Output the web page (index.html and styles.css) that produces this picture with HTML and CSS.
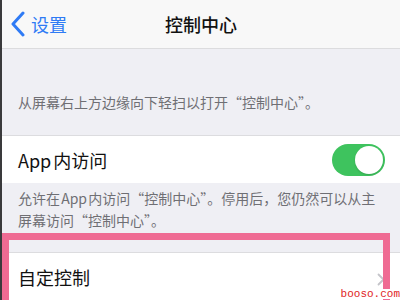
FILE: index.html
```html
<!DOCTYPE html>
<html lang="zh-CN">
<head>
<meta charset="utf-8">
<title>控制中心</title>
<link rel="stylesheet" href="styles.css">
</head>
<body>
<div class="screen">
  <header class="nav">
    <a class="back">
      <svg class="chev" width="16" height="26" viewBox="0 0 16 26"><path d="M13 2 L3 13 L13 24" fill="none" stroke="#2f7bf5" stroke-width="3" stroke-linecap="round" stroke-linejoin="round"/></svg>
      <span>设置</span>
    </a>
    <h1 class="title">控制中心</h1>
  </header>
  <p class="note first">从屏幕右上方边缘向下轻扫以打开“控制中心”。</p>
  <div class="row">
    <span class="label">App 内访问</span>
    <span class="switch"><span class="knob"></span></span>
  </div>
  <p class="note second">允许在 App 内访问“控制中心”。停用后，您仍然可以从主屏幕访问“控制中心”。</p>
  <div class="row">
    <span class="label">自定控制</span>
    <svg class="arrow" width="8" height="13" viewBox="0 0 8 13"><path d="M1.5 1.5 L6.5 6.5 L1.5 11.5" fill="none" stroke="#c4c4c9" stroke-width="1.8" stroke-linecap="round" stroke-linejoin="round"/></svg>
  </div>
  <div class="highlight"></div>
  <div class="watermark">booso.com</div>
</div>
</body>
</html>
```
FILE: styles.css
```css
html, body {
  margin: 0;
  padding: 0;
}
body {
  width: 400px;
  height: 300px;
  overflow: hidden;
  background: #efeff4;
  font-family: "Noto Sans CJK SC", "Noto Sans", sans-serif;
}
.screen {
  position: relative;
  height: 300px;
  border-left: 2px solid #3a3a3c;
  box-sizing: border-box;
  overflow: hidden;
}
.nav {
  position: relative;
  height: 48px;
  background: #f8f8f8;
  border-bottom: 1px solid #dcdcde;
  display: flex;
  align-items: center;
}
.back {
  display: flex;
  align-items: center;
  gap: 5px;
  padding-left: 8px;
  color: #2f7bf5;
  font-size: 18px;
  line-height: 24px;
}
.title {
  position: absolute;
  left: 0;
  right: 0;
  top: 0;
  margin: 0;
  text-align: center;
  font-size: 18px;
  font-weight: 500;
  line-height: 48px;
  color: #111;
}
.note {
  margin: 0;
  color: #6f6f74;
  font-size: 14px;
}
.note.first {
  padding: 43px 16px 23px 16px;
  line-height: 20px;
}
.note.second {
  padding: 4px 14px 21px 16px;
  line-height: 22px;
  word-spacing: -2px;
}
.row {
  height: 48px;
  background: #fff;
  border-top: 1px solid #dcdcdf;
  display: flex;
  align-items: center;
  justify-content: space-between;
  padding: 0 15px 0 16px;
  box-sizing: border-box;
}
.label {
  font-size: 18px;
  color: #111;
  word-spacing: -2px;
}
.switch {
  width: 53px;
  height: 32px;
  border-radius: 16px;
  background: #3ec35e;
  position: relative;
  display: block;
}
.knob {
  position: absolute;
  right: 2px;
  top: 2px;
  width: 28px;
  height: 28px;
  border-radius: 50%;
  background: #fff;
  box-shadow: 0 1px 2px rgba(0,0,0,0.15);
}
.arrow {
  margin-top: 6px;
}
.highlight {
  position: absolute;
  left: 0;
  top: 233px;
  width: 388px;
  height: 120px;
  border: 7px solid #ef6b93;
  box-sizing: border-box;
}
.watermark {
  position: absolute;
  right: 0;
  bottom: 1px;
  font-family: "Liberation Mono", monospace;
  font-size: 11px;
  line-height: 10px;
  color: #e01e1e;
  background: #fff;
  padding: 0 0 0 2px;
}
```
